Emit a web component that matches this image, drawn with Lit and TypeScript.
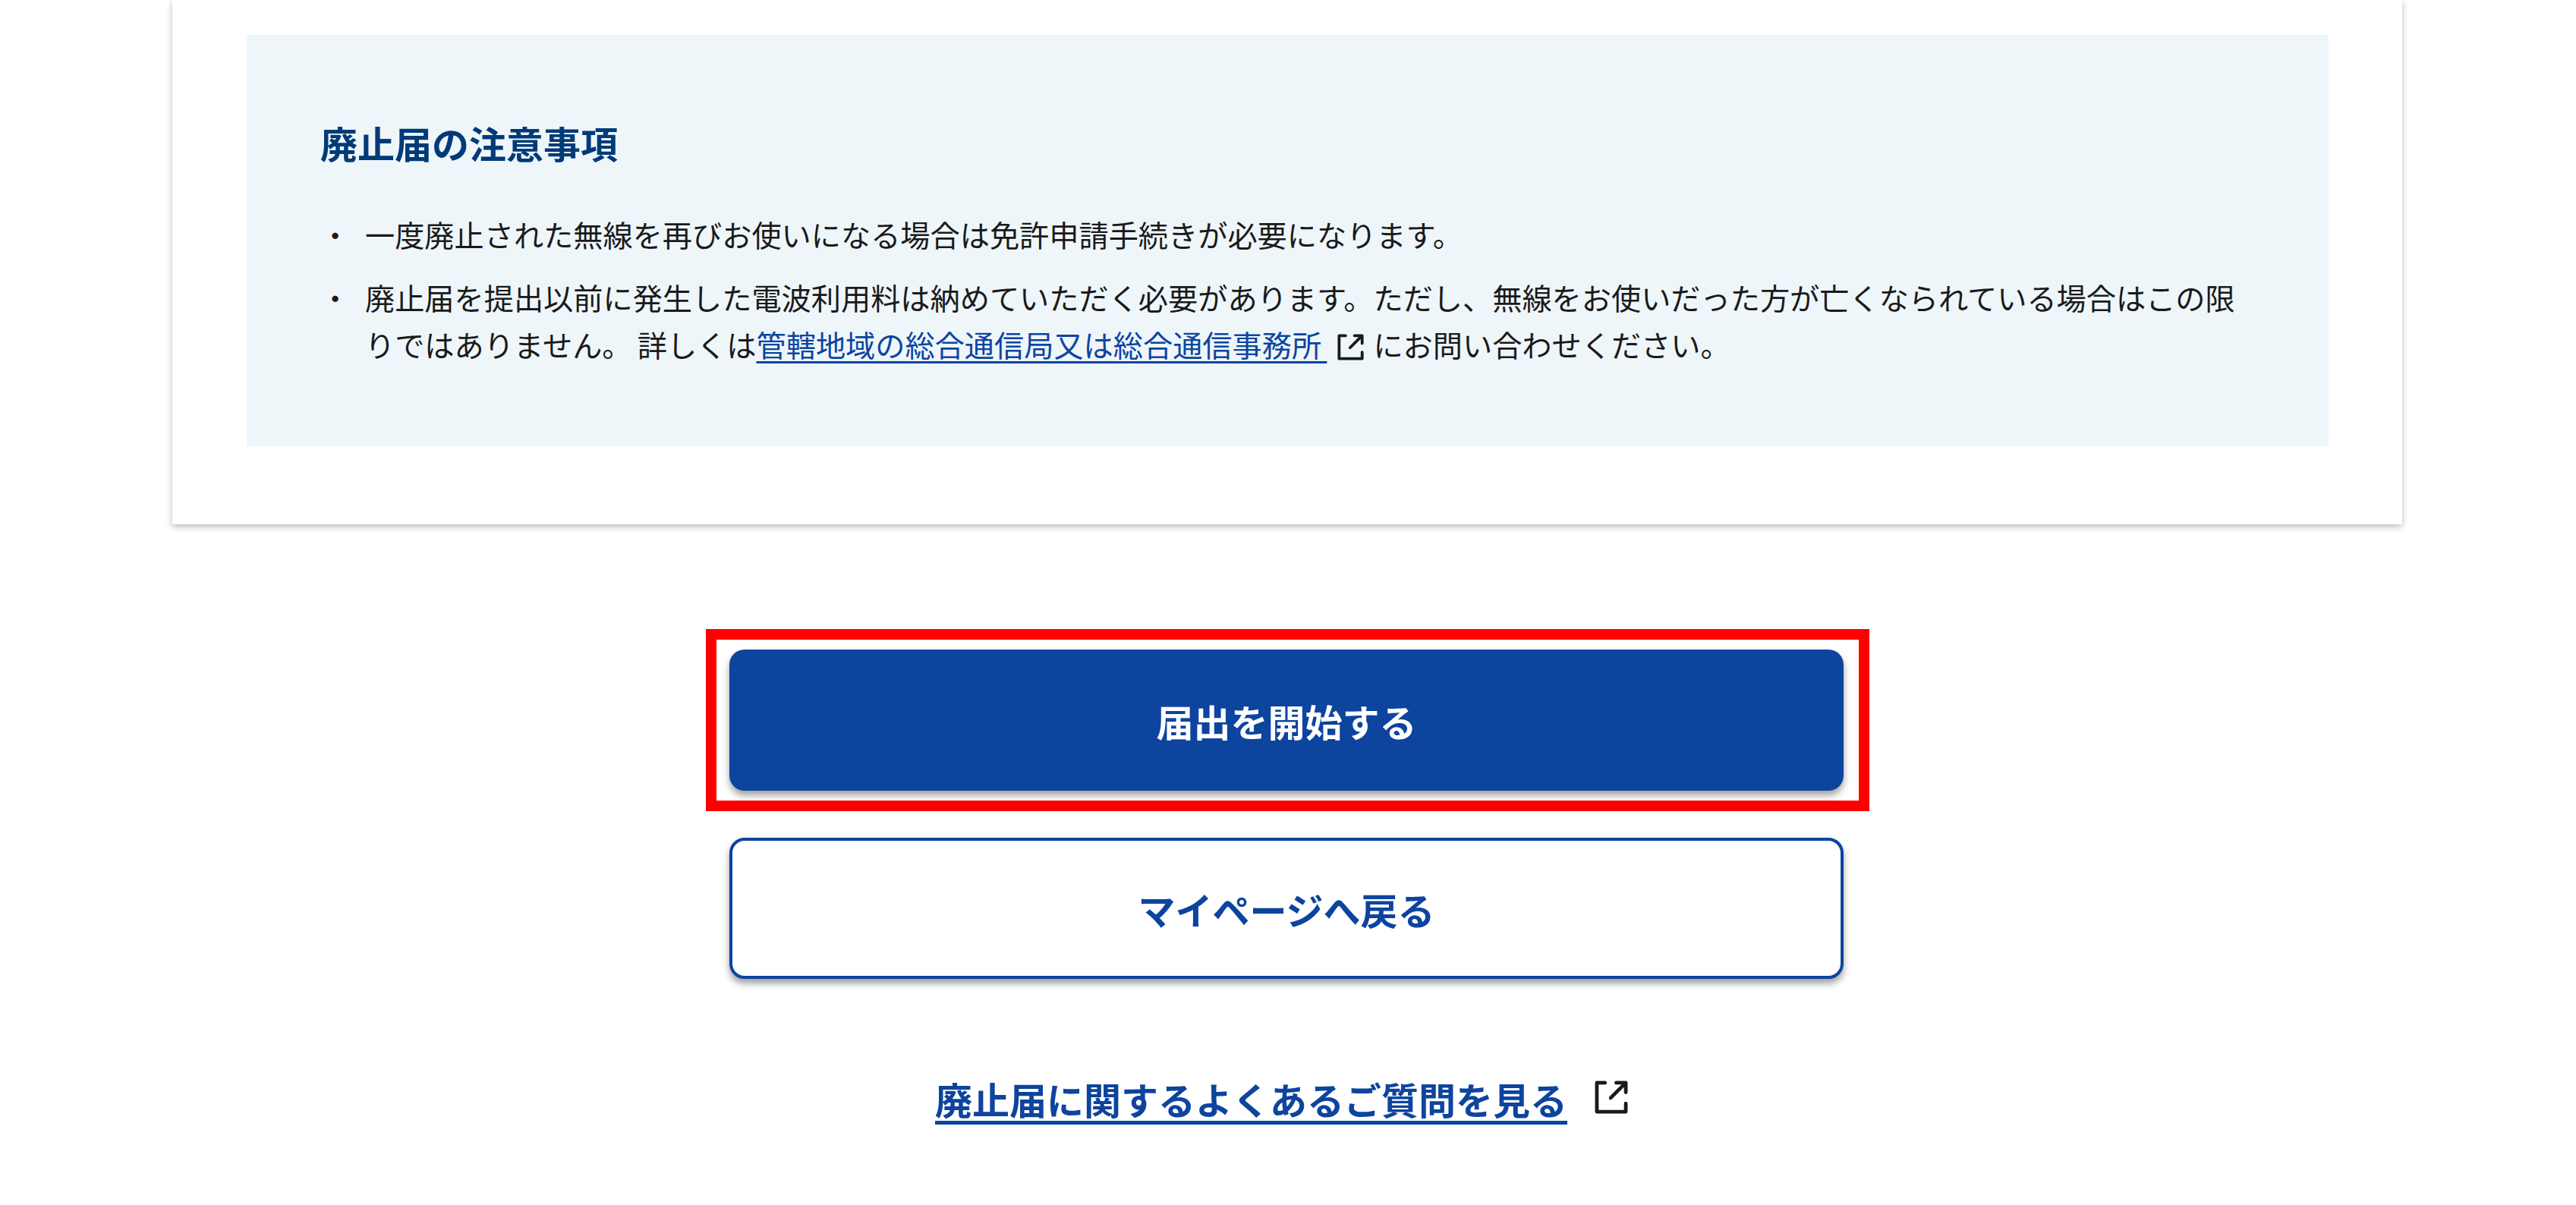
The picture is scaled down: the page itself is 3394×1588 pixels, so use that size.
import { LitElement, html, css, svg } from "lit";
import { customElement } from "lit/decorators.js";

const icon = (cls: string) => html`<svg class="ext ${cls}" viewBox="0 0 24 24" fill="none" stroke="currentColor" stroke-width="2.6" stroke-linecap="round" stroke-linejoin="round" aria-hidden="true">
  ${svg`<path d="M7.5 1.6H1.6V22.4H22.4V16.5"/><path d="M15.5 1.6H22.4V8.5"/><path d="M22 2L11.5 12.5"/>`}
</svg>`;

@customElement("app-root")
export class AppRoot extends LitElement {
  static styles = css`
    :host {
      display: block;
      min-height: 1588px;
      background: #fff;
      overflow: hidden;
      font-family: "Noto Sans CJK JP", "Noto Sans", sans-serif;
      color: #1a1a1a;
    }
    .page {
      width: 2938px;
      margin-left: 227px;
      display: flex;
      flex-direction: column;
      align-items: center;
    }
    .card {
      align-self: stretch;
      box-sizing: border-box;
      padding: 46px 97px 103px 98px;
      background: #fff;
      box-shadow: 0 3px 8px rgba(0, 0, 0, 0.28);
    }
    .notice {
      background: #eef6fa;
      padding: 110px 97px 0;
      height: 542px;
      box-sizing: border-box;
    }
    h2 {
      margin: 0 0 57px;
      font-size: 49px;
      line-height: 64px;
      font-weight: 700;
      color: #003b78;
    }
    ul {
      list-style: none;
      margin: 0;
      padding: 0;
      display: flex;
      flex-direction: column;
      gap: 20px;
    }
    li {
      display: flex;
      gap: 20px;
      font-size: 39.2px;
      line-height: 62.5px;
      word-spacing: -1.5px;
    }
    .mark {
      flex: none;
      width: 39px;
    }
    .inline-link {
      color: #0d459f;
      text-decoration: underline;
      text-decoration-thickness: 3px;
      text-underline-offset: 6px;
    }
    .ext {
      flex: none;
      color: #1a1a1a;
    }
    .small {
      display: inline-block;
      width: 35px;
      height: 35px;
      margin: 0 12px 0 14px;
      vertical-align: -5px;
    }
    .highlight {
      position: relative;
      margin-top: 165px;
      align-self: flex-start;
      margin-left: 734px;
    }
    .highlight::after {
      content: "";
      position: absolute;
      top: -27px;
      bottom: -27px;
      left: -31px;
      right: -34px;
      border: 14px solid #ff0000;
      pointer-events: none;
    }
    .btn {
      display: flex;
      align-items: center;
      justify-content: center;
      box-sizing: border-box;
      width: 1468px;
      height: 186px;
      border-radius: 20px;
      font-size: 49px;
      font-weight: 700;
      box-shadow: 0 6px 10px rgba(0, 0, 0, 0.38);
    }
    .primary {
      background: #0d449e;
      color: #fff;
    }
    .secondary {
      align-self: flex-start;
      margin-left: 734px;
      margin-top: 62px;
      background: #fff;
      color: #0d449e;
      border: 4px solid #0d449e;
    }
    .faq {
      display: flex;
      align-items: flex-start;
      gap: 36px;
      margin-top: 120px;
      padding-right: 15px;
      font-size: 49px;
      font-weight: 700;
      line-height: 75px;
    }
    .faq a {
      color: #0d449e;
      text-decoration: underline;
      text-decoration-thickness: 5px;
      text-underline-offset: 8px;
    }
    .large {
      display: block;
      width: 44px;
      height: 44px;
      margin-top: 14px;
    }
  `;

  render() {
    return html`<div class="page">
      <section class="card">
        <div class="notice">
          <h2>廃止届の注意事項</h2>
          <ul>
            <li><span class="mark">・</span><span>一度廃止された無線を再びお使いになる場合は免許申請手続きが必要になります。</span></li>
            <li><span class="mark">・</span><span>廃止届を提出以前に発生した電波利用料は納めていただく必要があります。ただし、無線をお使いだった方が亡くなられている場合はこの限りではありません。 詳しくは<a class="inline-link" href="#">管轄地域の総合通信局又は総合通信事務所 </a>${icon("small")}にお問い合わせください。</span></li>
          </ul>
        </div>
      </section>
      <div class="highlight"><div class="btn primary">届出を開始する</div></div>
      <div class="btn secondary">マイページへ戻る</div>
      <div class="faq"><a href="#">廃止届に関するよくあるご質問を見る</a>${icon("large")}</div>
    </div>`;
  }
}
